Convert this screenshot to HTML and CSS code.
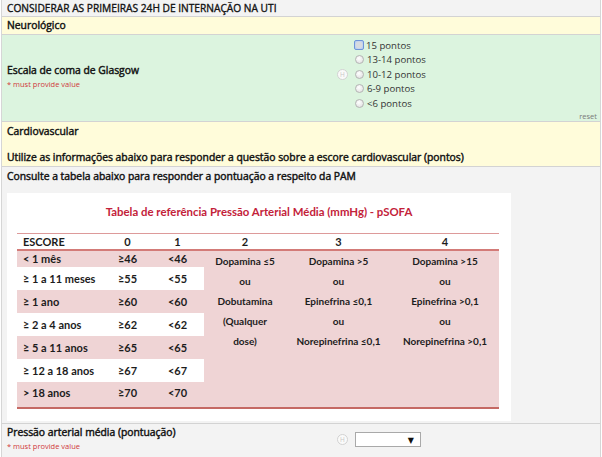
FILE: index.html
```html
<!DOCTYPE html>
<html lang="pt">
<head>
<meta charset="utf-8">
<title>pSOFA</title>
<link rel="stylesheet" href="styles.css">
</head>
<body>
<div class="form">
  <div class="row gray title">CONSIDERAR AS PRIMEIRAS 24H DE INTERNAÇÃO NA UTI</div>
  <div class="row yellow section">Neurológico</div>
  <div class="row green field glasgow">
    <div class="lbl">
      <div class="lbl-text">Escala de coma de Glasgow</div>
      <div class="req">* must provide value</div>
    </div>
    <div class="ctrl">
      <div class="ctrl-main">
        <span class="hicon">H</span>
        <div class="radios">
          <label class="opt"><span class="radio focus"></span>15 pontos</label>
          <label class="opt"><span class="radio"></span>13-14 pontos</label>
          <label class="opt"><span class="radio"></span>10-12 pontos</label>
          <label class="opt"><span class="radio"></span>6-9 pontos</label>
          <label class="opt"><span class="radio"></span>&lt;6 pontos</label>
        </div>
      </div>
      <div class="reset">reset</div>
    </div>
  </div>
  <div class="row yellow section cardio">Cardiovascular<br><br>Utilize as informações abaixo para responder a questão sobre a escore cardiovascular (pontos)</div>
  <div class="row gray desc">
    <div class="desc-text">Consulte a tabela abaixo para responder a pontuação a respeito da PAM</div>
    <div class="picture">
      <div class="pic-title">Tabela de referência Pressão Arterial Média (mmHg) - pSOFA</div>
      <table class="ref">
        <colgroup>
          <col class="c-lbl"><col class="c-0"><col class="c-1"><col class="c-2"><col class="c-3"><col class="c-4">
        </colgroup>
        <thead>
          <tr><th class="left">ESCORE</th><th>0</th><th>1</th><th>2</th><th>3</th><th>4</th></tr>
        </thead>
        <tbody>
          <tr class="r1">
            <td class="left">&lt; 1 mês</td><td class="num">≥46</td><td class="num">&lt;46</td>
            <td rowspan="7" class="drugs"><div>Dopamina ≤5</div><div>ou</div><div>Dobutamina</div><div>(Qualquer</div><div>dose)</div></td>
            <td rowspan="7" class="drugs"><div>Dopamina &gt;5</div><div>ou</div><div>Epinefrina ≤0,1</div><div>ou</div><div>Norepinefrina ≤0,1</div></td>
            <td rowspan="7" class="drugs"><div>Dopamina &gt;15</div><div>ou</div><div>Epinefrina &gt;0,1</div><div>ou</div><div>Norepinefrina &gt;0,1</div></td>
          </tr>
          <tr class="alt"><td class="left">≥ 1 a 11 meses</td><td class="num">≥55</td><td class="num">&lt;55</td></tr>
          <tr><td class="left">≥ 1 ano</td><td class="num">≥60</td><td class="num">&lt;60</td></tr>
          <tr class="alt"><td class="left">≥ 2 a 4 anos</td><td class="num">≥62</td><td class="num">&lt;62</td></tr>
          <tr><td class="left">≥ 5 a 11 anos</td><td class="num">≥65</td><td class="num">&lt;65</td></tr>
          <tr class="alt"><td class="left">≥ 12 a 18 anos</td><td class="num">≥67</td><td class="num">&lt;67</td></tr>
          <tr class="last"><td class="left">&gt; 18 anos</td><td class="num">≥70</td><td class="num">&lt;70</td></tr>
        </tbody>
      </table>
    </div>
  </div>
  <div class="row gray field pam">
    <div class="lbl">
      <div class="lbl-text">Pressão arterial média (pontuação)</div>
      <div class="req">* must provide value</div>
    </div>
    <div class="pam-ctrl">
      <span class="hicon">H</span>
      <div class="select"><span class="arrow">▼</span></div>
    </div>
  </div>
</div>
</body>
</html>
```

FILE: styles.css
```css
html, body {
  margin: 0;
  padding: 0;
  background: #ffffff;
}

body {
  font-family: "Open Sans", "DejaVu Sans", sans-serif;
  font-size: 10px;
  color: #1a1a1a;
}

.form {
  width: 598px;
  margin-left: 1px;
  border-left: 1px solid #d6d6d6;
  border-right: 1px solid #d6d6d6;
}

.row {
  border-bottom: 1px solid #d3d3d3;
  padding: 0 5px;
}

.gray { background: #f3f3f3; }
.yellow { background: #fffcda; }
.green { background: #dcf4df; }

.title,
.section,
.lbl-text,
.desc-text {
  color: #141414;
  font-size: 10.35px;
  -webkit-text-stroke: 0.45px #141414;
}

.title {
  height: 16px;
  line-height: 16px;
  font-size: 10.2px;
  -webkit-text-stroke: 0.35px #141414;
}

.section {
  height: 17px;
  line-height: 17px;
}

.cardio {
  height: auto;
  line-height: 13px;
  padding-top: 3px;
  padding-bottom: 2px;
}

.field {
  display: flex;
}

.lbl {
  width: 330px;
  flex: none;
  align-self: center;
}

.lbl-text {
  line-height: 14px;
}

.req {
  color: #d0393a;
  font-size: 7.5px;
  line-height: 12px;
  margin-top: 1px;
}

.glasgow {
  height: 86px;
}

.glasgow .lbl {
  padding-bottom: 4px;
}

.ctrl {
  flex: 1;
  display: flex;
  flex-direction: column;
}

.ctrl-main {
  display: flex;
  align-items: center;
  padding-top: 3px;
}

.hicon {
  width: 9px;
  height: 9px;
  border: 1px solid #d2d2d2;
  border-radius: 50%;
  background: #fafafa;
  color: #c8c8c8;
  font-size: 6.5px;
  line-height: 9px;
  text-align: center;
  margin-right: 4px;
  flex: none;
}

.radios {
  display: flex;
  flex-direction: column;
  margin-left: 3px;
}

.opt {
  display: flex;
  align-items: center;
  height: 14.5px;
  color: #333;
  font-size: 9.6px;
}

.radio {
  width: 7px;
  height: 7px;
  border: 1px solid #b4b4b4;
  border-radius: 50%;
  background: radial-gradient(circle at 40% 35%, #ffffff 0%, #e6e6e6 70%);
  margin-right: 3px;
  flex: none;
}

.radio.focus {
  border-radius: 2px;
  border: 1px solid #6f95d8;
  background: radial-gradient(circle, #d8dbe0 0 3px, #bcd0f1 4px);
  width: 8px;
  height: 8px;
  margin-left: -1px;
  margin-right: 2px;
}

.reset {
  margin-top: auto;
  align-self: flex-end;
  font-size: 7.5px;
  color: #7a7a7a;
  line-height: 10px;
  padding-bottom: 2px;
  margin-right: -2px;
}

.desc {
  padding-top: 2px;
  padding-bottom: 2px;
}

.desc-text {
  line-height: 14px;
}

.picture {
  width: 504px;
  height: 228px;
  background: #ffffff;
  margin-top: 10px;
  font-family: "Lato", "Liberation Sans", sans-serif;
  font-weight: 700;
  color: #1c1c1c;
  padding-top: 12px;
  box-sizing: border-box;
}

.pic-title {
  text-align: center;
  color: #c3223a;
  font-size: 11.4px;
  line-height: 14px;
  height: 28px;
}

.ref {
  margin-left: 10px;
  width: 482px;
  border-collapse: collapse;
  table-layout: fixed;
  font-size: 10px;
}

.c-lbl { width: 87px; }
.c-0 { width: 47px; }
.c-1 { width: 53px; }
.c-2 { width: 82px; }
.c-3 { width: 105px; }
.c-4 { width: 108px; }

.ref th, .ref td {
  padding: 0;
  text-align: center;
  vertical-align: middle;
  white-space: nowrap;
}

.ref .left {
  text-align: left;
  padding-left: 6px;
  font-size: 11px;
}

.ref .num {
  font-size: 11px;
}

.ref thead tr {
  border-top: 1px solid #dd9a9a;
  border-bottom: 2px solid #d37b78;
  height: 16px;
}

.ref thead th {
  font-weight: 700;
  font-size: 11px;
}

.ref tbody {
  background: #efd4d5;
  border-bottom: 2px solid #c56964;
}

.ref tbody tr {
  height: 23px;
}

.ref tbody tr.r1 {
  height: 17px;
}

.ref tbody tr.last {
  height: 26px;
}

.ref tbody tr.last td {
  vertical-align: top;
  padding-top: 4px;
}

.ref tbody tr.alt td {
  background: #ffffff;
}

.ref td.drugs {
  vertical-align: top;
  line-height: 20px;
  font-size: 10px;
}

.pam {
  height: 33px;
}

.pam .lbl {
  align-self: flex-start;
  padding-top: 1px;
}

.pam-ctrl {
  display: flex;
  align-items: center;
  padding-top: 8px;
  align-self: flex-start;
}

.select {
  width: 58px;
  height: 13px;
  border: 1px solid #a9a9a9;
  background: #ffffff;
  margin-left: 3px;
  display: flex;
  align-items: center;
  justify-content: flex-end;
  padding-right: 6px;
}

.arrow {
  font-size: 8px;
  line-height: 8px;
  color: #111;
}
```
